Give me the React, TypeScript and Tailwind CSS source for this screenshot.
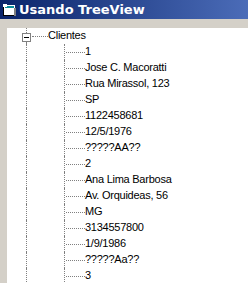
import React from "react";

const items = [
  "1",
  "Jose C. Macoratti",
  "Rua Mirassol, 123",
  "SP",
  "1122458681",
  "12/5/1976",
  "?????AA??",
  "2",
  "Ana Lima Barbosa",
  "Av. Orquideas, 56",
  "MG",
  "3134557800",
  "1/9/1986",
  "?????Aa??",
  "3",
];

const vline = "border-l border-dotted border-[#808080]";

export default function App() {
  return (
    <div className="w-[248px] h-[283px] overflow-hidden bg-[#d4d0c8] flex flex-col" style={{ fontFamily: '"Liberation Sans", Arial, sans-serif' }}>
      <div className="h-[19px] shrink-0 flex items-center bg-[linear-gradient(90deg,#0a246a,#4b6cb8)]">
        <svg width="14" height="13" viewBox="0 0 14 13" className="ml-[3px] mt-[1px]">
          <rect x="0" y="2" width="11" height="10" fill="#000" />
          <rect x="1" y="1" width="11" height="10" fill="#fff" />
          <rect x="2" y="2" width="9" height="2" fill="#0a8c9a" />
          <rect x="0" y="0" width="4" height="3" fill="#fff" />
          <rect x="11" y="4" width="2" height="8" fill="#808080" />
        </svg>
        <span className="ml-[2px] text-white font-bold text-[13px] leading-none" style={{ fontFamily: '"DejaVu Sans", Verdana, sans-serif' }}>
          Usando TreeView
        </span>
      </div>
      <div className="h-[9px] shrink-0" />
      <div className="flex-1 ml-[7px] bg-white text-black text-[11px] tracking-[-0.25px] leading-none">
        <div className="h-[16px] flex">
          <div className="w-[15px] shrink-0" />
          <div className="w-[9px] shrink-0 flex flex-col items-center">
            <div className={"h-[5px] w-0 " + vline} />
            <div className="w-[9px] h-[9px] border border-[#808080] bg-white flex items-center justify-center">
              <div className="w-[5px] h-px bg-black" />
            </div>
            <div className={"h-[2px] w-0 " + vline} />
          </div>
          <div className="w-[17px] shrink-0 flex items-center pl-[1px]">
            <div className="w-[16px] h-0 border-t border-dotted border-[#808080]" />
          </div>
          <div className="flex items-center pb-[1px]">Clientes</div>
        </div>
        {items.map((t, i) => (
          <div key={i} className="h-[16px] flex">
            <div className="w-[19px] shrink-0" />
            <div className={"w-[38px] shrink-0 " + vline} />
            <div className={"w-[21px] shrink-0 flex items-center " + vline}>
              <div className="w-[19px] ml-px h-0 border-t border-dotted border-[#808080]" />
            </div>
            <div className="flex items-center pb-[1px] whitespace-nowrap">{t}</div>
          </div>
        ))}
      </div>
    </div>
  );
}
